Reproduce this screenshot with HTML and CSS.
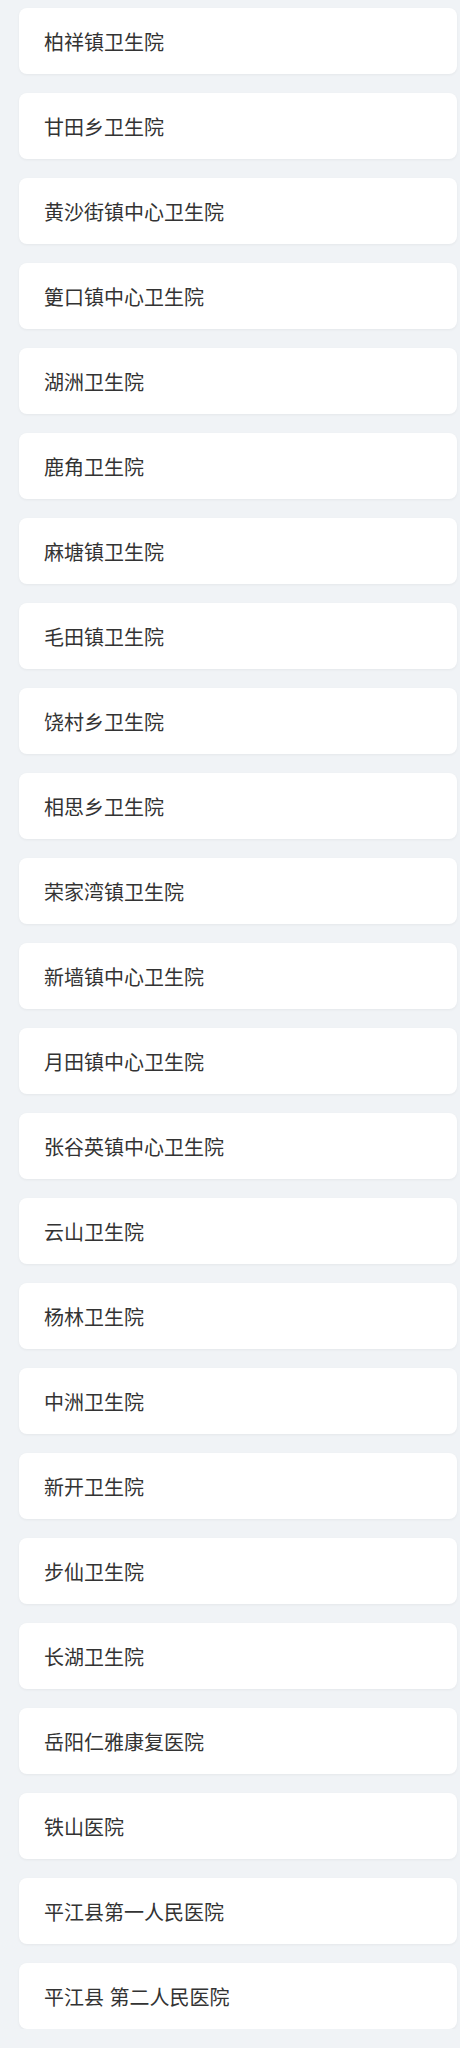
FILE: index.html
```html
<!DOCTYPE html>
<html lang="zh-CN">
<head>
<meta charset="utf-8">
<title>医院列表</title>
<link rel="stylesheet" href="styles.css">
</head>
<body>
<ul class="list">
  <li class="card">柏祥镇卫生院</li>
  <li class="card">甘田乡卫生院</li>
  <li class="card">黄沙街镇中心卫生院</li>
  <li class="card">筻口镇中心卫生院</li>
  <li class="card">湖洲卫生院</li>
  <li class="card">鹿角卫生院</li>
  <li class="card">麻塘镇卫生院</li>
  <li class="card">毛田镇卫生院</li>
  <li class="card">饶村乡卫生院</li>
  <li class="card">相思乡卫生院</li>
  <li class="card">荣家湾镇卫生院</li>
  <li class="card">新墙镇中心卫生院</li>
  <li class="card">月田镇中心卫生院</li>
  <li class="card">张谷英镇中心卫生院</li>
  <li class="card">云山卫生院</li>
  <li class="card">杨林卫生院</li>
  <li class="card">中洲卫生院</li>
  <li class="card">新开卫生院</li>
  <li class="card">步仙卫生院</li>
  <li class="card">长湖卫生院</li>
  <li class="card">岳阳仁雅康复医院</li>
  <li class="card">铁山医院</li>
  <li class="card">平江县第一人民医院</li>
  <li class="card">平江县 第二人民医院</li>
</ul>
</body>
</html>
```
FILE: styles.css
```css
html, body {
  margin: 0;
  padding: 0;
  background: #f0f3f6;
}
body {
  font-family: "Liberation Sans", "Noto Sans CJK SC", sans-serif;
  color: #333333;
}
.list {
  list-style: none;
  margin: 0;
  padding: 8px 3px 0 19px;
  display: flex;
  flex-direction: column;
  gap: 19px;
}
.card {
  height: 66px;
  box-sizing: border-box;
  background: #ffffff;
  border-radius: 8px;
  padding-left: 25px;
  display: flex;
  align-items: center;
  font-size: 20px;
  box-shadow: 0 1px 3px rgba(0, 0, 0, 0.05);
}
```
